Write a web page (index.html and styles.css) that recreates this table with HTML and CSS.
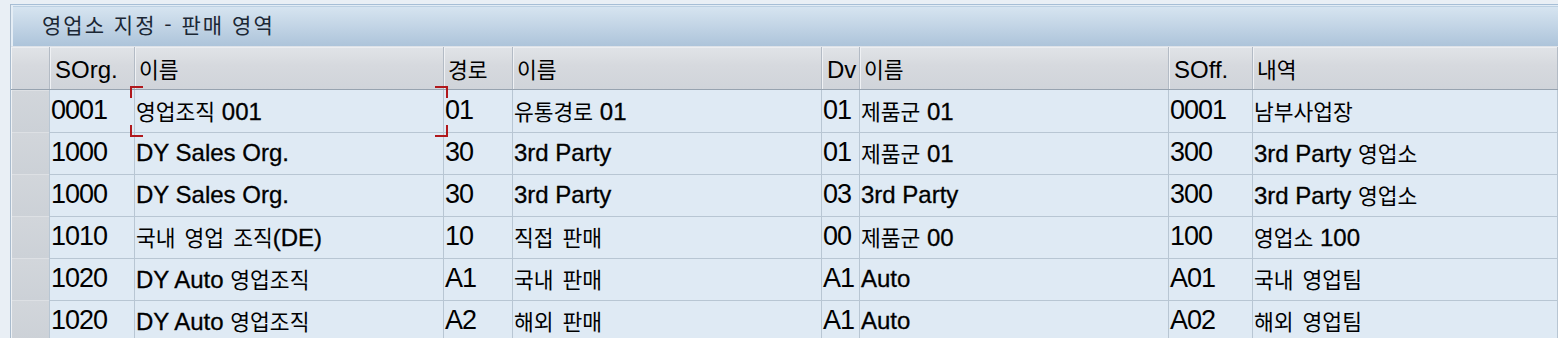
FILE: index.html
```html
<!DOCTYPE html>
<html lang="ko">
<head>
<meta charset="utf-8">
<title>영업소 지정 - 판매 영역</title>
<link rel="stylesheet" href="styles.css">
</head>
<body>
<div class="frame">
  <div class="panel">
    <div class="title">영업소 지정 - 판매 영역</div>
    <div class="table">
      <div class="row head">
        <div class="sel"></div>
        <div class="cell lat">SOrg.</div>
        <div class="cell ko">이름</div>
        <div class="cell ko">경로</div>
        <div class="cell ko">이름</div>
        <div class="cell lat">Dv</div>
        <div class="cell ko">이름</div>
        <div class="cell lat">SOff.</div>
        <div class="cell ko">내역</div>
      </div>
      <div class="row data">
        <div class="sel"></div>
        <div class="cell num">0001</div>
        <div class="cell txt focus-cell"><span class="k">영업조직</span> 001<span class="focus"><i class="c tl"></i><i class="c tr"></i><i class="c bl"></i><i class="c br"></i></span></div>
        <div class="cell num">01</div>
        <div class="cell txt"><span class="k">유통경로</span> 01</div>
        <div class="cell num">01</div>
        <div class="cell txt"><span class="k">제품군</span> 01</div>
        <div class="cell num">0001</div>
        <div class="cell txt"><span class="k">남부사업장</span></div>
      </div>
      <div class="row data">
        <div class="sel"></div>
        <div class="cell num">1000</div>
        <div class="cell txt">DY Sales Org.</div>
        <div class="cell num">30</div>
        <div class="cell txt">3rd Party</div>
        <div class="cell num">01</div>
        <div class="cell txt"><span class="k">제품군</span> 01</div>
        <div class="cell num">300</div>
        <div class="cell txt">3rd Party <span class="k">영업소</span></div>
      </div>
      <div class="row data">
        <div class="sel"></div>
        <div class="cell num">1000</div>
        <div class="cell txt">DY Sales Org.</div>
        <div class="cell num">30</div>
        <div class="cell txt">3rd Party</div>
        <div class="cell num">03</div>
        <div class="cell txt">3rd Party</div>
        <div class="cell num">300</div>
        <div class="cell txt">3rd Party <span class="k">영업소</span></div>
      </div>
      <div class="row data">
        <div class="sel"></div>
        <div class="cell num">1010</div>
        <div class="cell txt"><span class="k">국내 영업 조직</span>(DE)</div>
        <div class="cell num">10</div>
        <div class="cell txt"><span class="k">직접 판매</span></div>
        <div class="cell num">00</div>
        <div class="cell txt"><span class="k">제품군</span> 00</div>
        <div class="cell num">100</div>
        <div class="cell txt"><span class="k">영업소</span> 100</div>
      </div>
      <div class="row data">
        <div class="sel"></div>
        <div class="cell num">1020</div>
        <div class="cell txt">DY Auto <span class="k">영업조직</span></div>
        <div class="cell num">A1</div>
        <div class="cell txt"><span class="k">국내 판매</span></div>
        <div class="cell num">A1</div>
        <div class="cell txt">Auto</div>
        <div class="cell num">A01</div>
        <div class="cell txt"><span class="k">국내 영업팀</span></div>
      </div>
      <div class="row data">
        <div class="sel"></div>
        <div class="cell num">1020</div>
        <div class="cell txt">DY Auto <span class="k">영업조직</span></div>
        <div class="cell num">A2</div>
        <div class="cell txt"><span class="k">해외 판매</span></div>
        <div class="cell num">A1</div>
        <div class="cell txt">Auto</div>
        <div class="cell num">A02</div>
        <div class="cell txt"><span class="k">해외 영업팀</span></div>
      </div>
    </div>
  </div>
</div>
</body>
</html>
```
FILE: styles.css
```css
html, body {
  margin: 0;
  padding: 0;
  background: #e9eff5;
  overflow: hidden;
}

.frame {
  padding: 4px 0 0 10px;
  width: 1548px;
  height: 334px;
}

.panel {
  border-left: 1px solid #a9bbcd;
  height: 100%;
  background: #dfeaf4;
}

.title {
  border-top: 1px solid #a6bed6;
  border-bottom: 1px solid #dde2e8;
  height: 41px;
  line-height: 39px;
  padding-left: 31px;
  background: linear-gradient(to bottom, #e2ecf5 0, #e2ecf5 1px, #bcd0e2 1px, #bcd0e2 2px, #d6e4f0 2px, #c3d5e6 50%, #adc4da 100%);
  box-shadow: inset 2px 0 0 #e4edf5;
  font-family: "Noto Sans CJK KR", "Noto Sans", sans-serif;
  font-size: 21px;
  letter-spacing: 2px;
  color: #1b2734;
}

.row {
  display: grid;
  grid-template-columns: 39px 85px 309px 69px 309px 38px 309px 84px 1fr;
}

.cell, .sel {
  box-sizing: border-box;
  white-space: nowrap;
}

.head {
  height: 43px;
  background: linear-gradient(to bottom, #eceef1 0, #eceef1 1px, #e0e3e7 1px, #d6d9de 45%, #d0d4da 100%);
  border-bottom: 1px solid #97a3b0;
  box-sizing: border-box;
}

.head .cell {
  border-right: 1px solid #b3bbc5;
  box-shadow: inset 1px 0 0 #eff1f4;
  padding: 6px 0 0 5px;
  line-height: 34px;
  color: #000;
}

.head .lat {
  font-family: "Liberation Sans", Arial, sans-serif;
  font-size: 24px;
}

.head .ko {
  font-family: "Noto Sans CJK KR", "Noto Sans", sans-serif;
  font-size: 21.5px;
  padding-left: 4px;
  line-height: 32px;
}

.head .sel {
  border-right: 1px solid #b3bbc5;
  box-shadow: inset 1px 0 0 #f2f4f6;
}

.data {
  height: 42px;
}

.data .cell {
  border-right: 1px solid #b8c6d3;
  border-bottom: 1px solid #b8c6d3;
  line-height: 41px;
  padding-left: 1px;
  color: #000;
  font-family: "Liberation Sans", Arial, "Noto Sans CJK KR", sans-serif;
  font-size: 24px;
}

.data .txt {
  -webkit-text-stroke: 0.3px #000;
}

.data .num {
  font-size: 27px;
  letter-spacing: -1px;
}

.k {
  font-family: "Noto Sans CJK KR", "Noto Sans", sans-serif;
  font-size: 21.5px;
  word-spacing: 3px;
  -webkit-text-stroke: 0;
}

.data .sel {
  border-right: 1px solid #b8c6d3;
  border-bottom: 1px solid #eef1f4;
  background: linear-gradient(to bottom, #dde0e4 0, #dde0e4 1px, #d2d6db 1px, #ccd1d7 100%);
  box-shadow: inset 1px 0 0 #eef1f4;
}

.focus-cell {
  position: relative;
}

.focus {
  position: absolute;
  top: -4px;
  left: -5px;
  right: -5px;
  bottom: -5px;
  z-index: 2;
  pointer-events: none;
}

.c {
  position: absolute;
  width: 11px;
  height: 10px;
  border: 0 solid #b0181c;
  -webkit-text-stroke: 0;
}

.tl { top: 0; left: 0; border-top-width: 2px; border-left-width: 2px; }
.tr { top: 0; right: 0; border-top-width: 2px; border-right-width: 2px; }
.bl { bottom: 0; left: 0; border-bottom-width: 2px; border-left-width: 2px; }
.br { bottom: 0; right: 0; border-bottom-width: 2px; border-right-width: 2px; }
```
